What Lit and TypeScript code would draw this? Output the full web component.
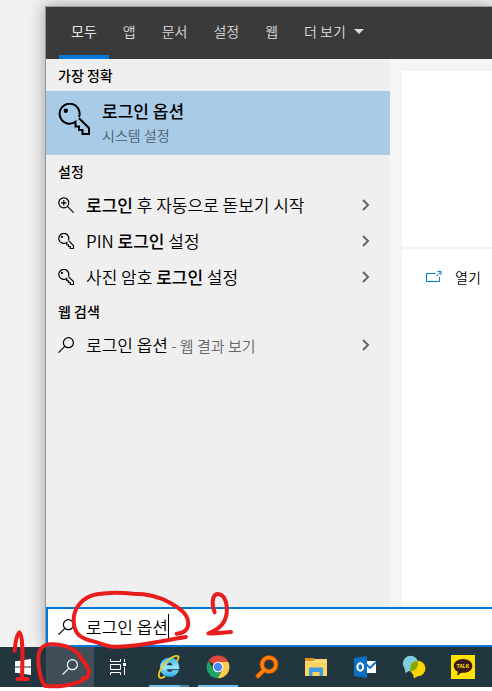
import { LitElement, html, css, svg } from "lit";
import { customElement, property } from "lit/decorators.js";

type Part = { text: string; strong?: boolean; muted?: boolean };
type Row = { icon: string; parts: Part[] };

const keyShape = svg`
  <path d="M21 14.2A10 10 0 1 0 17.5 18.800V23.500H21V27H24.500V31H31V25L21 15.200"
    fill="none" stroke="currentColor"></path>
  <circle cx="7.800" cy="7.800" r="2.200" fill="currentColor"></circle>`;

const icons: Record<string, unknown> = {
  key: html`<svg viewBox="0 0 32 32" stroke-width="2" aria-hidden="true">${keyShape}</svg>`,
  smallkey: html`<svg viewBox="0 0 32 32" stroke-width="2.400" aria-hidden="true">${keyShape}</svg>`,
  magnify: html`<svg viewBox="0 0 16 16" fill="none" stroke="currentColor" stroke-width="1.2" aria-hidden="true">
    <circle cx="5.8" cy="5.8" r="5"></circle><path d="M9.4 9.4L15.6 15.6M5.8 3v5.6M3 5.8h5.6"></path></svg>`,
  search: html`<svg viewBox="0 0 16 16" fill="none" stroke="currentColor" stroke-width="1.2" aria-hidden="true">
    <circle cx="10.4" cy="5.7" r="5"></circle><path d="M6.8 9.3L.5 15.6"></path></svg>`,
  chevron: html`<svg viewBox="0 0 8 12" fill="none" stroke="currentColor" stroke-width="2" aria-hidden="true">
    <path d="M1 1l5 5-5 5"></path></svg>`,
  open: html`<svg viewBox="0 0 16 12" fill="none" stroke="currentColor" stroke-width="1" aria-hidden="true">
    <path d="M9.5 2.5H.5v8h13V6M10 5.5L14.5 1M11.5.5h3.500v3.500"></path></svg>`,
  windows: html`<svg viewBox="0 0 16 16" fill="#fff" aria-hidden="true">
    <path d="M0 2.3L6.6 1.4V7.6H0zM7.4 1.3L16 0V7.6H7.4zM0 8.4H6.6V14.6L0 13.7zM7.4 8.4H16V16L7.4 14.7z"></path></svg>`,
  taskview: html`<svg viewBox="0 0 16 16" fill="none" stroke="#fff" stroke-width="1" aria-hidden="true">
    <path d="M.5 0V2.5H10.5V0M.5 16V13.5H10.5V16M.5 5.500H10.500V10.500H.5zM14.500 0V3M14.500 8V16"></path>
    <rect x="13" y="4" width="3" height="3" fill="#fff" stroke="none"></rect></svg>`,
  ie: html`<svg viewBox="0 0 24 24" aria-hidden="true">
    <defs><linearGradient id="ie" x1="0" y1="0" x2="0" y2="1"><stop offset="0" stop-color="#2fb5ee"></stop>
      <stop offset=".5" stop-color="#9fe6ff"></stop><stop offset="1" stop-color="#27a9ea"></stop></linearGradient></defs>
    <path d="M21.500 15.500C20 19.500 16.800 21.600 12.800 21.600C7.200 21.600 3.400 17.800 3.400 12.200C3.400 6.600 7.200 2.800 12.700 2.800C18.600 2.800 22.200 7 22 14H9.500C9.700 16 10.900 17.100 12.900 17.100C14.200 17.100 15 16.600 15.600 15.500zM9.600 10.500H15.700C15.400 8.700 14.500 7.600 12.700 7.600C11 7.600 9.900 8.700 9.600 10.500z"
      fill="url(#ie)" stroke="url(#ie)" stroke-width=".6"></path>
    <path d="M19.500 6.500C22 3.500 22.300 1 20 .9C15.500.8 7.500 7 3.500 14.500C1 19.500 1.300 23.500 4.500 22.800C5.600 22.600 6.800 22 8 21.200"
      fill="none" stroke="#f5cb25" stroke-width="1.800"></path></svg>`,
  chrome: html`<svg viewBox="0 0 24 24" aria-hidden="true">
    <path d="M12 12L2.500 5.900A11.300 11.300 0 0 1 22.300 7H12z" fill="#dd4b3e"></path>
    <path d="M12 7H22.300A11.300 11.300 0 0 1 11.600 23.300L16.400 14.500z" fill="#fbcd4d"></path>
    <path d="M2.500 5.900A11.300 11.300 0 0 0 11.600 23.300L16.400 14.500L12 12L7.600 14.500z" fill="#1da362"></path>
    <circle cx="12" cy="12" r="5.300" fill="#fff"></circle><circle cx="12" cy="12" r="4.200" fill="#4a87ee"></circle></svg>`,
  finder: html`<svg viewBox="0 0 24 24" fill="none" aria-hidden="true">
    <g stroke="#a64700" stroke-width="5"><circle cx="14" cy="9.500" r="7"></circle><path d="M9 15L3 21" stroke-linecap="round"></path></g>
    <g stroke="#ff7e0e" stroke-width="3.500"><circle cx="14" cy="9.500" r="7"></circle><path d="M9 15L3 21" stroke-linecap="round"></path></g></svg>`,
  folder: html`<svg viewBox="0 0 24 24" aria-hidden="true">
    <path d="M1 3H9L11 4H23V21H1z" fill="#fbd364"></path><path d="M1 3H9L10.500 4.500L9 6H1z" fill="#dd8f13"></path>
    <path d="M1 6H23V7H1z" fill="#ffe08a"></path>
    <path d="M5 21V13.500Q5 12.500 6 12.500H18Q19 12.500 19 13.500V21H15.500V17H8.500V21z" fill="#3f9ee4"></path></svg>`,
  outlook: html`<svg viewBox="0 0 24 24" aria-hidden="true">
    <path d="M12 6H23V18H12z" fill="#fff"></path><path d="M13 9L17 13L23 7" fill="none" stroke="#0a72c6" stroke-width="1.800"></path>
    <path d="M1 3L14 1V23L1 21z" fill="#0b6fc4"></path>
    <ellipse cx="7.300" cy="12" rx="2.900" ry="3.700" fill="none" stroke="#fff" stroke-width="2.100"></ellipse></svg>`,
  bubbles: html`<svg viewBox="0 0 24 24" aria-hidden="true">
    <defs><clipPath id="blue"><circle cx="8.500" cy="8.500" r="7.700"></circle></clipPath></defs>
    <circle cx="8.500" cy="8.500" r="7.700" fill="#82cbdc"></circle>
    <path d="M2.500 13L3.500 18L8 15.500z" fill="#82cbdc"></path>
    <circle cx="15.800" cy="13.500" r="7.700" fill="#fdd400"></circle>
    <path d="M11 19L12 23.500L17 20.500z" fill="#fdd400"></path>
    <circle cx="15.800" cy="13.500" r="7.700" fill="#84a600" clip-path="url(#blue)"></circle></svg>`,
  talk: html`<svg viewBox="0 0 24 24" aria-hidden="true">
    <rect width="24" height="24" fill="#ffe100"></rect>
    <path d="M12 4C6.500 4 2.800 7 2.800 11C2.800 13.500 4.300 15.500 6.800 16.700L6 20.500L10.500 17.800C17 18.300 21.300 15.200 21.300 11C21.300 7 17.500 4 12 4z" fill="#3b1c1c"></path>
    <text x="12" y="13" text-anchor="middle" font-family="Liberation Sans, sans-serif" font-weight="700" font-size="5" fill="#ffe100">TALK</text></svg>`,
};

@customElement("result-row")
class ResultRow extends LitElement {
  @property({ attribute: false }) row!: Row;

  static styles = css`
    :host { display: block; }
    .row {
      display: flex; align-items: center; gap: 12px; width: 100%; height: 36px;
      padding: 0 20px 0 12px; border: 0; background: none; color: #000; font: inherit; text-align: left;
    }
    .icon { flex: none; width: 16px; height: 16px; }
    .text { flex: 1; white-space: nowrap; }
    .strong { font-weight: 500; }
    .muted { color: #666; font-size: 15px; }
    .chevron { flex: none; width: 8px; height: 12px; color: #666; }
    svg { display: block; width: 100%; height: 100%; }
  `;

  render() {
    return html`<button class="row">
      <span class="icon">${icons[this.row.icon]}</span>
      <span class="text">${this.row.parts.map(
        (p) => html`<span class=${p.strong ? "strong" : p.muted ? "muted" : ""}>${p.text}</span>`
      )}</span>
      <span class="chevron">${icons.chevron}</span>
    </button>`;
  }
}

@customElement("app-root")
class AppRoot extends LitElement {
  static styles = css`
    :host {
      display: flex; flex-direction: column; box-sizing: border-box; position: relative;
      min-height: 100vh; padding-bottom: 4px; background: #fff; color: #000; overflow: hidden;
      font: 350 17px/24px "Noto Sans CJK KR", sans-serif;
    }
    * { box-sizing: border-box; }
    button { font: inherit; color: inherit; border: 0; background: none; padding: 0; }
    svg { display: block; width: 100%; height: 100%; }
    .desktop { flex: 1; display: flex; padding: 6px 0 0 45px; background: #f0f0f0; }
    .panel {
      flex: 1; min-width: 0; display: flex; flex-direction: column;
      border: solid #999; border-width: 1px 0 0 1px; box-shadow: 0 0 14px rgba(0, 0, 0, 0.35);
    }
    .tabs { display: flex; gap: 2px; height: 52px; padding-left: 13px; background: #3a3a3a; color: #ddd; font-size: 14px; }
    .tab { display: flex; align-items: center; gap: 8px; padding: 4px 12px 4px; border-bottom: 4px solid transparent; white-space: nowrap; }
    .tab.on { border-color: #0078d7; color: #fff; }
    .caret { border: solid transparent; border-width: 5px 5px 0; border-top-color: #ddd; }
    .body { flex: 1; display: flex; background: #f4f4f4; }
    .results { flex: 0 1 344px; background: #efefef; }
    .heading { margin: 0; padding: 0 12px; font-size: 14px; line-height: 32px; font-weight: 500; }
    .best { display: flex; align-items: center; gap: 12px; width: 100%; height: 64px; padding: 0 12px; background: #a8cbe7; text-align: left; }
    .best-icon { width: 32px; height: 32px; margin-top: -8px; }
    .best-text { display: flex; flex-direction: column; }
    .best-title { font-weight: 500; }
    .best-sub { font-size: 14px; color: #4c5f6e; }
    .preview { flex: 1; margin: 12px 0 0 12px; background: #fff; }
    .hero { height: 178px; border-bottom: 2px solid #f2f2f2; }
    .open { display: flex; align-items: center; gap: 13px; height: 56px; padding: 0 0 0 24px; font-size: 14px; white-space: nowrap; }
    .open-icon { flex: none; width: 16px; height: 12px; color: #0078d7; }
    .search { display: flex; align-items: center; height: 40px; padding: 0 10px; background: #fff; border: 2px solid #0078d7; border-right: 0; }
    .search-icon { flex: none; width: 16px; height: 16px; margin-right: 12px; }
    .query { field-sizing: content; padding: 0; border: 0; outline: 0; background: none; color: #000; font: inherit; }
    .cursor { width: 1px; height: 26px; background: #000; }
    .taskbar { display: flex; height: 40px; background: #22363f; color: #fff; }
    .task { flex: none; display: flex; flex-direction: column; align-items: center; justify-content: center; position: relative; width: 49px; }
    .system { width: 48px; }
    .start { width: 46px; }
    .last { margin-right: 2px; }
    .pressed { background: #3f4e57; }
    .glyph { width: 16px; height: 16px; }
    .logo { width: 24px; height: 24px; }
    .running::after { content: ""; position: absolute; left: 5px; right: 4px; bottom: 0; height: 2px; background: #76b9ed; }
    .stacked::after { background: linear-gradient(90deg, #76b9ed 31px, #4f86ab 31px); }
    .ink { position: absolute; left: 0; bottom: 0; width: 250px; height: 111px; pointer-events: none; }
  `;

  private tabs = ["모두", "앱", "문서", "설정", "웹"];

  private settings: Row[] = [
    { icon: "magnify", parts: [{ text: "로그인", strong: true }, { text: " 후 자동으로 돋보기 시작" }] },
    { icon: "smallkey", parts: [{ text: "PIN " }, { text: "로그인", strong: true }, { text: " 설정" }] },
    { icon: "smallkey", parts: [{ text: "사진 암호 " }, { text: "로그인", strong: true }, { text: " 설정" }] },
  ];

  private web: Row[] = [
    { icon: "search", parts: [{ text: "로그인 옵션" }, { text: " - 웹 결과 보기", muted: true }] },
  ];

  private apps = [
    { icon: "ie", label: "Internet Explorer", state: "running stacked" },
    { icon: "chrome", label: "Chrome", state: "running" },
    { icon: "finder", label: "Everything", state: "" },
    { icon: "folder", label: "파일 탐색기", state: "" },
    { icon: "outlook", label: "Outlook", state: "" },
    { icon: "bubbles", label: "메신저", state: "" },
    { icon: "talk", label: "카카오톡", state: "" },
  ];

  render() {
    return html`
      <main class="desktop">
        <section class="panel">
          <nav class="tabs">
            ${this.tabs.map((t, i) => html`<button class="tab ${i === 0 ? "on" : ""}">${t}</button>`)}
            <button class="tab">더 보기<span class="caret"></span></button>
          </nav>
          <div class="body">
            <div class="results">
              <h2 class="heading">가장 정확</h2>
              <button class="best">
                <span class="best-icon">${icons.key}</span>
                <span class="best-text">
                  <span class="best-title">로그인 옵션</span>
                  <span class="best-sub">시스템 설정</span>
                </span>
              </button>
              <h2 class="heading">설정</h2>
              ${this.settings.map((r) => html`<result-row .row=${r}></result-row>`)}
              <h2 class="heading">웹 검색</h2>
              ${this.web.map((r) => html`<result-row .row=${r}></result-row>`)}
            </div>
            <div class="preview">
              <div class="hero"></div>
              <button class="open"><span class="open-icon">${icons.open}</span>열기</button>
            </div>
          </div>
          <label class="search">
            <span class="search-icon">${icons.search}</span>
            <input class="query" type="text" aria-label="검색" .value=${"로그인 옵션"} />
            <span class="cursor"></span>
          </label>
        </section>
      </main>
      <footer class="taskbar">
        <button class="task start" aria-label="시작"><span class="glyph">${icons.windows}</span></button>
        <button class="task system pressed" aria-label="검색"><span class="glyph">${icons.search}</span></button>
        <button class="task system last" aria-label="작업 보기"><span class="glyph">${icons.taskview}</span></button>
        ${this.apps.map(
          (a) => html`<button class="task ${a.state}" aria-label=${a.label}><span class="logo">${icons[a.icon]}</span></button>`
        )}
      </footer>
      <svg class="ink" viewBox="0 0 750 333" fill="none" stroke="#e81e1e" stroke-width="12" stroke-linecap="round" stroke-linejoin="round" aria-hidden="true">
        <path d="M44 212C46 185 50 165 58 157C70 165 68 230 66 296M53 297H83"></path>
        <path d="M249 294C262 297 268 286 267 272C262 255 248 243 235 222C215 200 180 191 150 193C120 196 114 215 115 240C116 270 122 300 134 317C165 322 215 318 250 300"></path>
        <path d="M530 161C548 160 560 155 564 138C570 105 540 85 510 68C475 48 440 41 400 41C370 38 330 36 290 43C245 52 221 85 221 120C221 160 240 176 280 184C305 190 320 201 345 200C420 202 490 180 558 171"></path>
        <path d="M644 97C634 70 637 45 652 42C672 42 683 65 680 100C676 130 655 150 625 160C645 162 670 157 693 156"></path>
      </svg>
    `;
  }
}
